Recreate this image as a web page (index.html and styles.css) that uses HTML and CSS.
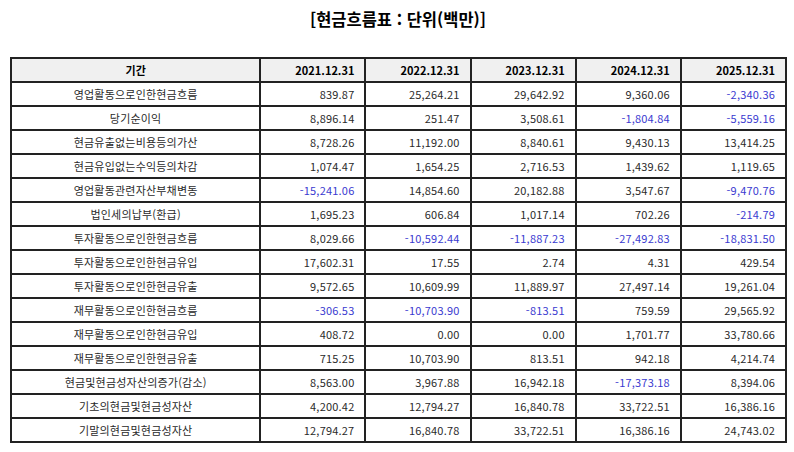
FILE: index.html
```html
<!DOCTYPE html>
<html lang="ko">
<head>
<meta charset="utf-8">
<title>현금흐름표</title>
<link rel="stylesheet" href="styles.css">
</head>
<body>
<div class="page">
  <h1 class="title">[현금흐름표 : 단위(백만)]</h1>
  <table class="cf">
    <colgroup>
      <col class="c-label"><col class="c-num"><col class="c-num"><col class="c-num"><col class="c-num"><col class="c-num">
    </colgroup>
    <thead>
      <tr><th class="lbl">기간</th><th>2021.12.31</th><th>2022.12.31</th><th>2023.12.31</th><th>2024.12.31</th><th>2025.12.31</th></tr>
    </thead>
    <tbody>
      <tr><td class="lbl">영업활동으로인한현금흐름</td><td>839.87</td><td>25,264.21</td><td>29,642.92</td><td>9,360.06</td><td class="neg">-2,340.36</td></tr>
      <tr><td class="lbl">당기순이익</td><td>8,896.14</td><td>251.47</td><td>3,508.61</td><td class="neg">-1,804.84</td><td class="neg">-5,559.16</td></tr>
      <tr><td class="lbl">현금유출없는비용등의가산</td><td>8,728.26</td><td>11,192.00</td><td>8,840.61</td><td>9,430.13</td><td>13,414.25</td></tr>
      <tr><td class="lbl">현금유입없는수익등의차감</td><td>1,074.47</td><td>1,654.25</td><td>2,716.53</td><td>1,439.62</td><td>1,119.65</td></tr>
      <tr><td class="lbl">영업활동관련자산부채변동</td><td class="neg">-15,241.06</td><td>14,854.60</td><td>20,182.88</td><td>3,547.67</td><td class="neg">-9,470.76</td></tr>
      <tr><td class="lbl">법인세의납부(환급)</td><td>1,695.23</td><td>606.84</td><td>1,017.14</td><td>702.26</td><td class="neg">-214.79</td></tr>
      <tr><td class="lbl">투자활동으로인한현금흐름</td><td>8,029.66</td><td class="neg">-10,592.44</td><td class="neg">-11,887.23</td><td class="neg">-27,492.83</td><td class="neg">-18,831.50</td></tr>
      <tr><td class="lbl">투자활동으로인한현금유입</td><td>17,602.31</td><td>17.55</td><td>2.74</td><td>4.31</td><td>429.54</td></tr>
      <tr><td class="lbl">투자활동으로인한현금유출</td><td>9,572.65</td><td>10,609.99</td><td>11,889.97</td><td>27,497.14</td><td>19,261.04</td></tr>
      <tr><td class="lbl">재무활동으로인한현금흐름</td><td class="neg">-306.53</td><td class="neg">-10,703.90</td><td class="neg">-813.51</td><td>759.59</td><td>29,565.92</td></tr>
      <tr><td class="lbl">재무활동으로인한현금유입</td><td>408.72</td><td>0.00</td><td>0.00</td><td>1,701.77</td><td>33,780.66</td></tr>
      <tr><td class="lbl">재무활동으로인한현금유출</td><td>715.25</td><td>10,703.90</td><td>813.51</td><td>942.18</td><td>4,214.74</td></tr>
      <tr><td class="lbl">현금및현금성자산의증가(감소)</td><td>8,563.00</td><td>3,967.88</td><td>16,942.18</td><td class="neg">-17,373.18</td><td>8,394.06</td></tr>
      <tr><td class="lbl">기초의현금및현금성자산</td><td>4,200.42</td><td>12,794.27</td><td>16,840.78</td><td>33,722.51</td><td>16,386.16</td></tr>
      <tr><td class="lbl">기말의현금및현금성자산</td><td>12,794.27</td><td>16,840.78</td><td>33,722.51</td><td>16,386.16</td><td>24,743.02</td></tr>
    </tbody>
  </table>
</div>
</body>
</html>
```
FILE: styles.css
```css
html, body {
  margin: 0;
  padding: 0;
  background: #ffffff;
}
.page {
  padding: 8px 8px 0 10px;
  font-family: "Noto Sans CJK KR", "Noto Sans", sans-serif;
  color: #111;
}
.title {
  margin: 0 0 27px 0;
  font-size: 16.5px;
  line-height: 22px;
  font-weight: 700;
  text-align: center;
  color: #000;
}
.cf {
  border-collapse: collapse;
  table-layout: fixed;
  width: 777px;
  font-size: 11px;
}
.c-label { width: 249px; }
.c-num { width: 105px; }
.cf th, .cf td {
  border: 2px solid #222;
  height: 22px;
  padding: 0 10px;
  text-align: right;
  vertical-align: middle;
  white-space: nowrap;
  line-height: 14px;
}
.cf th {
  background: #f0f0f0;
  font-weight: 700;
  color: #000;
}
.cf td {
  color: #2a2a2a;
  letter-spacing: 0.2px;
}
.cf .lbl {
  text-align: center;
}
.cf td.neg {
  color: #3a3ad0;
}
```
